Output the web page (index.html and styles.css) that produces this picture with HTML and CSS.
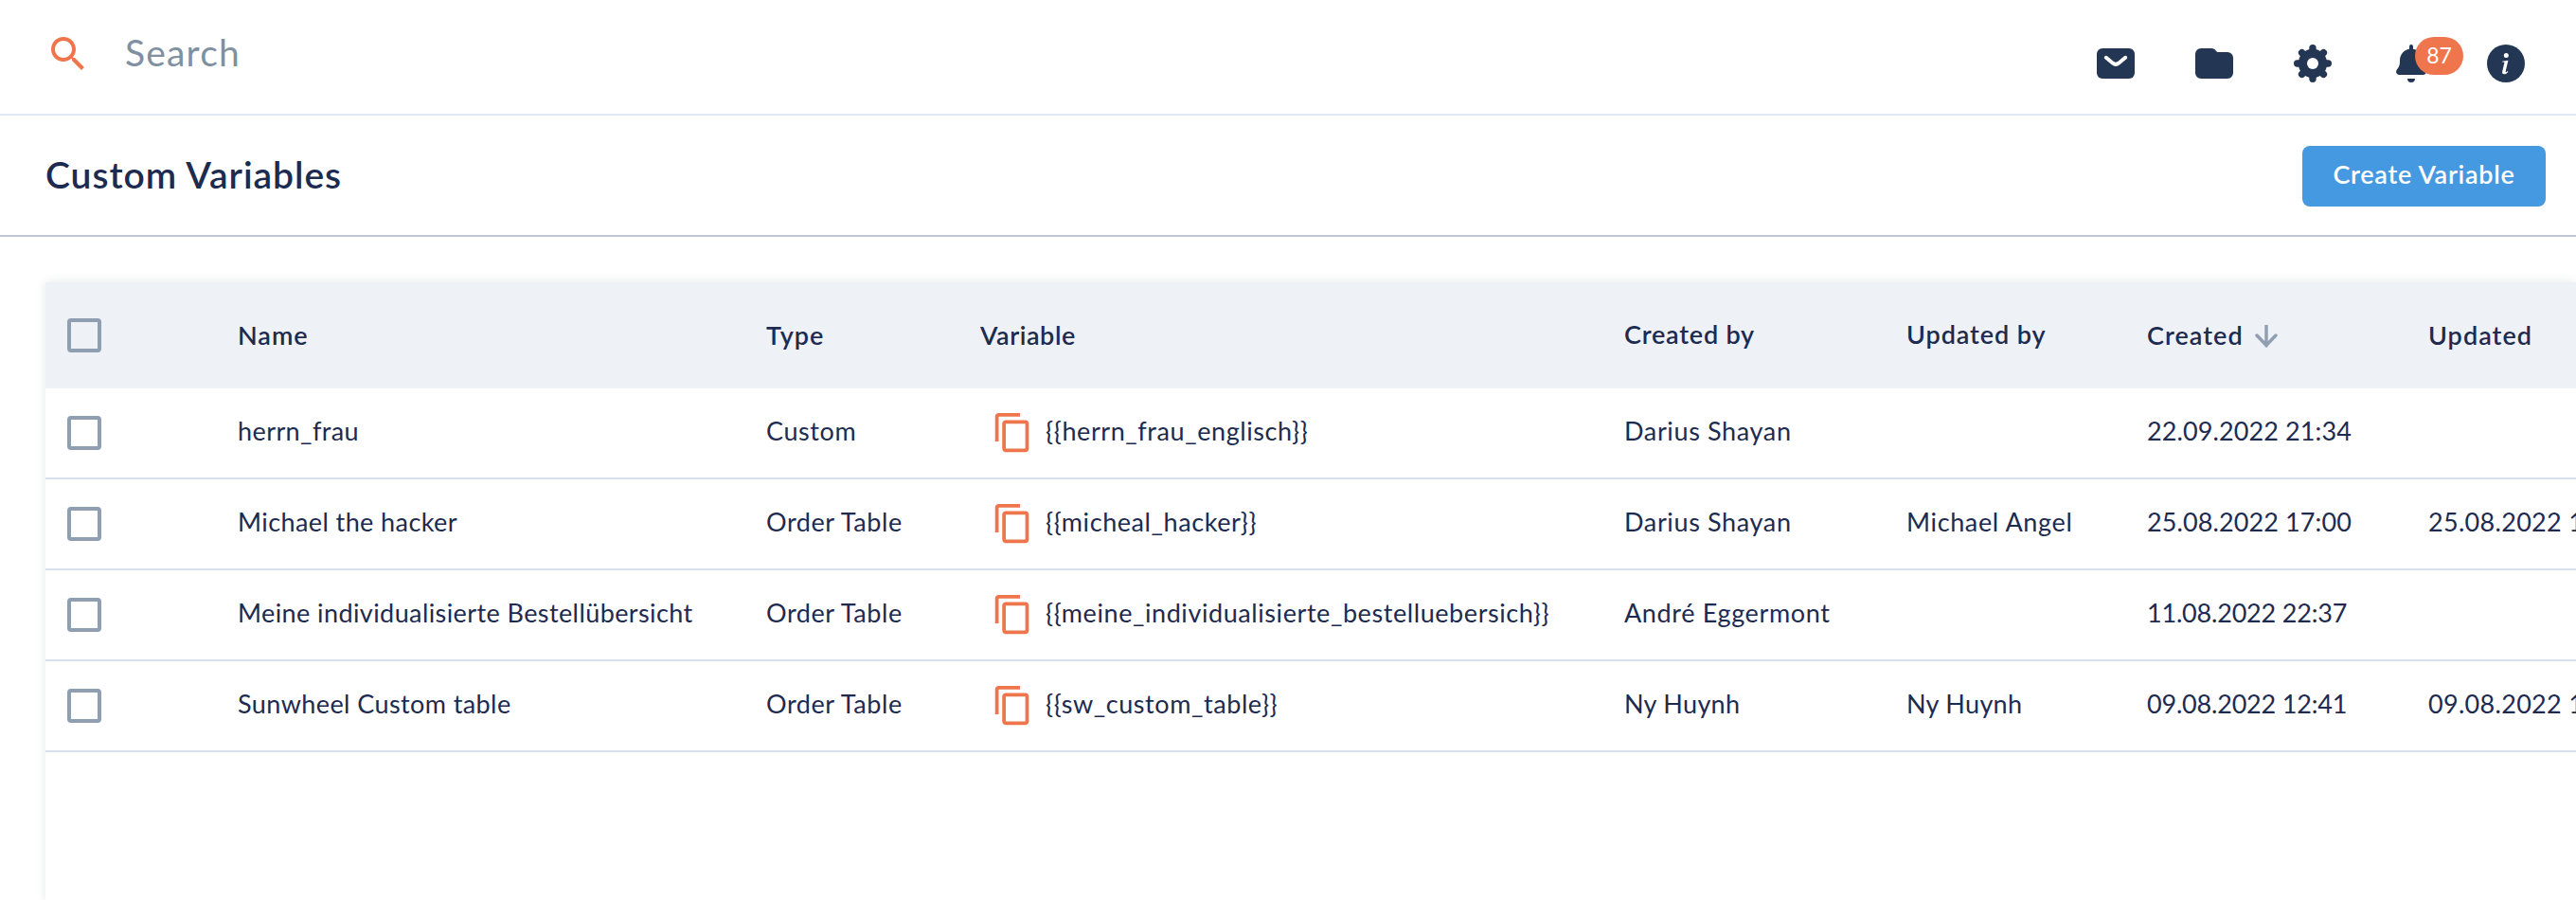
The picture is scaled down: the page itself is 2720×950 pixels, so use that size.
FILE: index.html
```html
<!DOCTYPE html>
<html lang="en">
<head>
<meta charset="utf-8">
<title>Custom Variables</title>
<link rel="stylesheet" href="styles.css">
</head>
<body>
<svg width="0" height="0" class="sprite" aria-hidden="true">
  <symbol id="copy" viewBox="0 0 24 24"><path d="M16 1H4c-1.100 0-2 .9-2 2v14h2V3h12V1zm3 4H8c-1.100 0-2 .9-2 2v14c0 1.100.9 2 2 2h11c1.100 0 2-.9 2-2V7c0-1.100-.9-2-2-2zm0 16H8V7h11v14z"/></symbol>
</svg>

<header class="topbar">
  <div class="search">
    <svg class="search-icon" viewBox="0 0 24 24"><path d="M15.500 14h-.79l-.28-.27C15.410 12.590 16 11.110 16 9.500 16 5.910 13.090 3 9.500 3S3 5.910 3 9.500 5.910 16 9.500 16c1.610 0 3.090-.59 4.230-1.570l.27.28v.79l5 4.990L20.490 19l-4.990-5zm-6 0C7.010 14 5 11.990 5 9.500S7.010 5 9.500 5 14 7.010 14 9.500 11.990 14 9.500 14z"/></svg>
    <span class="search-label">Search</span>
  </div>
  <nav class="tools">
    <svg class="tool" viewBox="0 0 40 40"><rect y="4" width="40" height="32" rx="6"/><path class="cut" d="M9.800 13.800l7.200 5.900q3 2.300 6 0l7.200-5.900"/></svg>
    <svg class="tool" viewBox="0 0 40 40"><path d="M6 4h11c2.500 0 3.500 1 4.500 2.200C22.300 7.300 23 8 24.500 8H34a6 6 0 0 1 6 6v16a6 6 0 0 1-6 6H6a6 6 0 0 1-6-6V10a6 6 0 0 1 6-6z"/></svg>
    <svg class="tool" viewBox="0 0 40 40"><circle cx="20" cy="20" r="15.200"/><path class="teeth" d="M20 3.700v32.600M3.700 20h32.600M8.600 8.600l22.800 22.800M31.400 8.600L8.600 31.400"/><circle class="hole" cx="20" cy="20" r="6"/></svg>
    <div class="bell">
      <svg class="tool" viewBox="0 0 40 40"><path d="M18 4.800V2a2 2 0 0 1 4 0v2.800C28 6 32 11 32 17c0 4.500.6 6.500 3 9.300C37 29 35.500 32 32.500 32h-25C4.500 32 3 29 5 26.300 7.400 23.500 8 21.500 8 17 8 11 12 6 18 4.800zM16 36h8a4 4 0 0 1-8 0z"/></svg>
      <span class="badge">87</span>
    </div>
    <svg class="tool info" viewBox="0 0 40 40"><circle cx="20" cy="20" r="20"/><circle class="hole" cx="20.300" cy="11.400" r="2.500"/><path class="hole" d="M16.200 17.700l6.200-.9-2.700 11.400c-.2 1 .3 1.200.9.700l1.200-.8.500.8c-1.300 1.500-2.800 2.300-4.200 2.300-1.700 0-2.300-1.200-1.900-2.800l2.200-9.200c.1-.4 0-.6-.4-.6h-1.800z"/></svg>
  </nav>
</header>

<section class="titlebar">
  <h1 class="title">Custom Variables</h1>
  <button class="create" type="button">Create Variable</button>
</section>

<main class="panel">
  <div class="row head">
    <div class="pick"><span class="box"></span></div>
    <div class="h-name">Name</div>
    <div class="h-type">Type</div>
    <div class="h-variable">Variable</div>
    <div class="h-by">Created by</div>
    <div class="h-by wide">Updated by</div>
    <div class="h-date">Created<svg class="sort" viewBox="0 0 24 24"><path d="M12 0v22M2 11l10 10.500L22 11"/></svg></div>
    <div class="h-date">Updated</div>
  </div>
  <div class="row">
    <div class="pick"><span class="box"></span></div>
    <div class="name">herrn_frau</div>
    <div class="type">Custom</div>
    <div class="variable"><svg class="copy"><use href="#copy"/></svg><span class="code">{{herrn_frau_englisch}}</span></div>
    <div class="by">Darius Shayan</div>
    <div class="by"></div>
    <div class="date">22.09.2022 21:34</div>
    <div class="date"></div>
  </div>
  <div class="row">
    <div class="pick"><span class="box"></span></div>
    <div class="name">Michael the hacker</div>
    <div class="type">Order Table</div>
    <div class="variable"><svg class="copy"><use href="#copy"/></svg><span class="code">{{micheal_hacker}}</span></div>
    <div class="by">Darius Shayan</div>
    <div class="by">Michael Angel</div>
    <div class="date">25.08.2022 17:00</div>
    <div class="date updated">25.08.2022 17:00</div>
  </div>
  <div class="row">
    <div class="pick"><span class="box"></span></div>
    <div class="name">Meine individualisierte Bestellübersicht</div>
    <div class="type">Order Table</div>
    <div class="variable"><svg class="copy"><use href="#copy"/></svg><span class="code">{{meine_individualisierte_bestelluebersich}}</span></div>
    <div class="by">André Eggermont</div>
    <div class="by"></div>
    <div class="date tight">11.08.2022 22:37</div>
    <div class="date"></div>
  </div>
  <div class="row">
    <div class="pick"><span class="box"></span></div>
    <div class="name">Sunwheel Custom table</div>
    <div class="type">Order Table</div>
    <div class="variable"><svg class="copy"><use href="#copy"/></svg><span class="code">{{sw_custom_table}}</span></div>
    <div class="by short">Ny Huynh</div>
    <div class="by short">Ny Huynh</div>
    <div class="date tight">09.08.2022 12:41</div>
    <div class="date updated">09.08.2022 12:41</div>
  </div>
</main>
</body>
</html>
```
FILE: styles.css
```css
* { box-sizing: border-box; }

body {
  margin: 0;
  height: 950px;
  display: flex;
  flex-direction: column;
  overflow: hidden;
  background: #fff;
  color: #1d2b50;
  font: 27px/32px "Lato", sans-serif;
  font-kerning: normal;
}

.sprite { position: absolute; }

/* Top bar */
.topbar {
  flex: none;
  height: 122px;
  display: flex;
  justify-content: space-between;
  align-items: flex-start;
  padding: 33px 54px 0 48px;
  border-bottom: 2px solid #e0eaf5;
}
.search { display: flex; align-items: center; gap: 36px; height: 48px; }
.search-icon { width: 48px; height: 48px; fill: #ef754c; }
.search-label {
  padding-bottom: 4px;
  font-size: 39px;
  line-height: 42px;
  letter-spacing: 1.2px;
  color: #8090a0;
}
.tools { display: flex; gap: 64px; padding-top: 14px; }
.tool { display: block; width: 40px; height: 40px; fill: #233754; }
.info { margin-left: -4px; }
.cut { fill: none; stroke: #fff; stroke-width: 4; stroke-linecap: round; stroke-linejoin: round; }
.teeth { fill: none; stroke: #233754; stroke-width: 7.4; stroke-linecap: round; }
.hole { fill: #fff; }
.bell { position: relative; }
.badge {
  position: absolute;
  left: 24px;
  top: -8px;
  width: 51px;
  height: 40px;
  padding-bottom: 3px;
  display: flex;
  align-items: center;
  justify-content: center;
  border-radius: 20px;
  background: #ef754c;
  color: #fff;
  font-size: 23px;
  line-height: 28px;
}

/* Title bar */
.titlebar {
  flex: none;
  height: 128px;
  display: flex;
  justify-content: space-between;
  align-items: flex-start;
  padding: 32px 32px 0 48px;
  border-bottom: 2px solid #c0c5d2;
}
.title {
  margin: 0;
  padding-top: 7px;
  font-size: 39px;
  line-height: 46px;
  font-weight: 600;
  letter-spacing: 0.95px;
}
.create {
  width: 257px;
  height: 64px;
  padding: 0 0 4px;
  border: 0;
  border-radius: 8px;
  background: #4599e0;
  color: #fff;
  font: 600 27px/32px "Lato", sans-serif;
  letter-spacing: 0.71px;
}

/* Table */
.panel {
  flex: 1;
  margin: 48px 0 0 48px;
  box-shadow: 0 0 10px rgba(40, 55, 80, 0.12);
}
.row {
  height: 96px;
  display: grid;
  grid-template-columns: 203px 558px 226px 680px 298px 254px 297px minmax(0, 1fr);
  align-items: center;
  border-bottom: 2px solid #d7e1ec;
  white-space: nowrap;
}
.row > div { padding-bottom: 4px; }
.row > .pick { padding: 0 0 0 23px; }
.box {
  display: block;
  width: 36px;
  height: 36px;
  border: 4px solid #8f9fb1;
  border-radius: 4px;
}
.head { height: 112px; border-bottom: 0; background: #eef1f6; font-weight: 600; }
.head > div { padding-bottom: 1px; }
.h-name, .h-type { letter-spacing: 1px; }
.h-variable { letter-spacing: 0.56px; }
.head > .h-by { padding-bottom: 3px; letter-spacing: 0.78px; }
.head > .wide { letter-spacing: 0.92px; }
.h-date { display: flex; align-items: center; letter-spacing: 1.05px; }
.sort {
  width: 24px;
  height: 24px;
  margin: 3px 0 0 12px;
  fill: none;
  stroke: #8f9fb1;
  stroke-width: 3.4;
  stroke-linecap: round;
}
.name { letter-spacing: 0.41px; }
.type { letter-spacing: 0.58px; }
.row > .variable { display: flex; align-items: center; gap: 12px; padding: 0 0 0 12px; }
.copy { width: 45px; height: 45px; margin-bottom: 2px; fill: #ef754c; }
.code { padding-bottom: 4px; letter-spacing: 0.58px; }
.by { letter-spacing: 0.64px; }
.short { letter-spacing: 0.3px; }
.date { letter-spacing: 0.1px; }
.tight { letter-spacing: -0.2px; }
.updated { letter-spacing: 0.3px; }
```
